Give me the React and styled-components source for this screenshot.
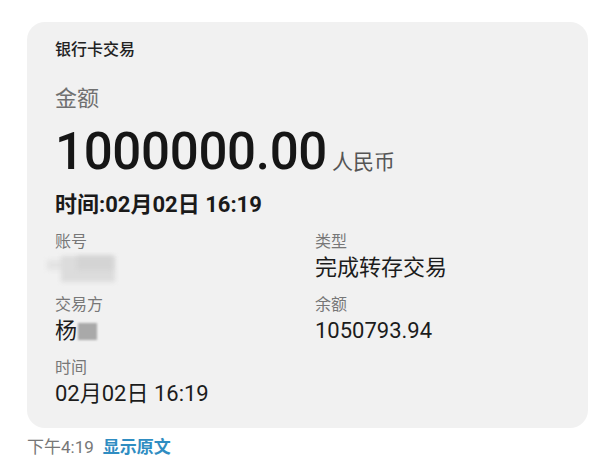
import styled, { createGlobalStyle } from 'styled-components'

const GlobalStyle = createGlobalStyle`
  body {
    margin: 0;
    background: #ffffff;
    font-family: Roboto, "Noto Sans CJK SC", sans-serif;
    color: #1c1c1c;
  }
`

const Page = styled.div`
  padding: 22px 12px 0 27px;
`

const Card = styled.div`
  width: 561px;
  box-sizing: border-box;
  background: #f1f1f1;
  border-radius: 18px;
  padding: 18px 28px 20px 28px;
`

const Title = styled.div`
  font-size: 16px;
  line-height: 20px;
  font-weight: 500;
  color: #222;
`

const AmountLabel = styled.div`
  margin-top: 25px;
  font-size: 22px;
  line-height: 28px;
  color: #707070;
`

const AmountRow = styled.div`
  margin-top: 9px;
  display: flex;
  align-items: baseline;
  height: 60px;
`

const Amount = styled.span`
  font-size: 51px;
  line-height: 60px;
  font-weight: 500;
  color: #161616;
  letter-spacing: -0.3px;
`

const Currency = styled.span`
  margin-left: 5px;
  font-size: 21px;
  color: #555;
`

const TimeLine = styled.div`
  margin-top: 9px;
  font-size: 22px;
  line-height: 28px;
  font-weight: 700;
  color: #1a1a1a;
`

const Details = styled.div`
  margin-top: 13px;
  display: grid;
  grid-template-columns: 260px 1fr;
  row-gap: 13px;
`

const Field = styled.div`
  display: flex;
  flex-direction: column;
  gap: 2px;
`

const Label = styled.div`
  font-size: 16px;
  line-height: 20px;
  color: #777;
`

const Value = styled.div`
  font-size: 22px;
  line-height: 28px;
  color: #1c1c1c;
  display: flex;
  align-items: center;
`

const Smudge = styled.div`
  position: relative;
  width: 70px;
  height: 28px;
  margin-left: -8px;
`

const SmudgePart = styled.span`
  position: absolute;
  left: ${p => p.$x}px;
  top: ${p => p.$y}px;
  width: ${p => p.$w}px;
  height: ${p => p.$h}px;
  background: ${p => p.$c};
  filter: blur(2px);
`

const Mask = styled.span`
  display: inline-block;
  width: 19px;
  height: 17px;
  margin-left: 1px;
  background: #a9a9a9;
  filter: blur(1px);
`

const Footer = styled.div`
  margin-top: 9px;
  font-size: 17px;
  line-height: 20px;
  color: #777;
  display: flex;
  gap: 9px;
`

const Link = styled.span`
  color: #2f8dc2;
  font-weight: 700;
`

export default function App() {
  return (
    <>
      <GlobalStyle />
      <Page>
        <Card>
          <Title>银行卡交易</Title>
          <AmountLabel>金额</AmountLabel>
          <AmountRow>
            <Amount>1000000.00</Amount>
            <Currency>人民币</Currency>
          </AmountRow>
          <TimeLine>时间:02月02日 16:19</TimeLine>
          <Details>
            <Field>
              <Label>账号</Label>
              <Value>
                <Smudge>
                  <SmudgePart $x={0} $y={6} $w={30} $h={10} $c="#e3e3e3" />
                  <SmudgePart $x={14} $y={2} $w={54} $h={26} $c="#dcdcdc" />
                  <SmudgePart $x={30} $y={2} $w={36} $h={14} $c="#d4d4d4" />
                </Smudge>
              </Value>
            </Field>
            <Field>
              <Label>类型</Label>
              <Value>完成转存交易</Value>
            </Field>
            <Field>
              <Label>交易方</Label>
              <Value>
                杨<Mask />
              </Value>
            </Field>
            <Field>
              <Label>余额</Label>
              <Value>1050793.94</Value>
            </Field>
            <Field>
              <Label>时间</Label>
              <Value>02月02日 16:19</Value>
            </Field>
          </Details>
        </Card>
        <Footer>
          <span>下午4:19</span>
          <Link>显示原文</Link>
        </Footer>
      </Page>
    </>
  )
}
